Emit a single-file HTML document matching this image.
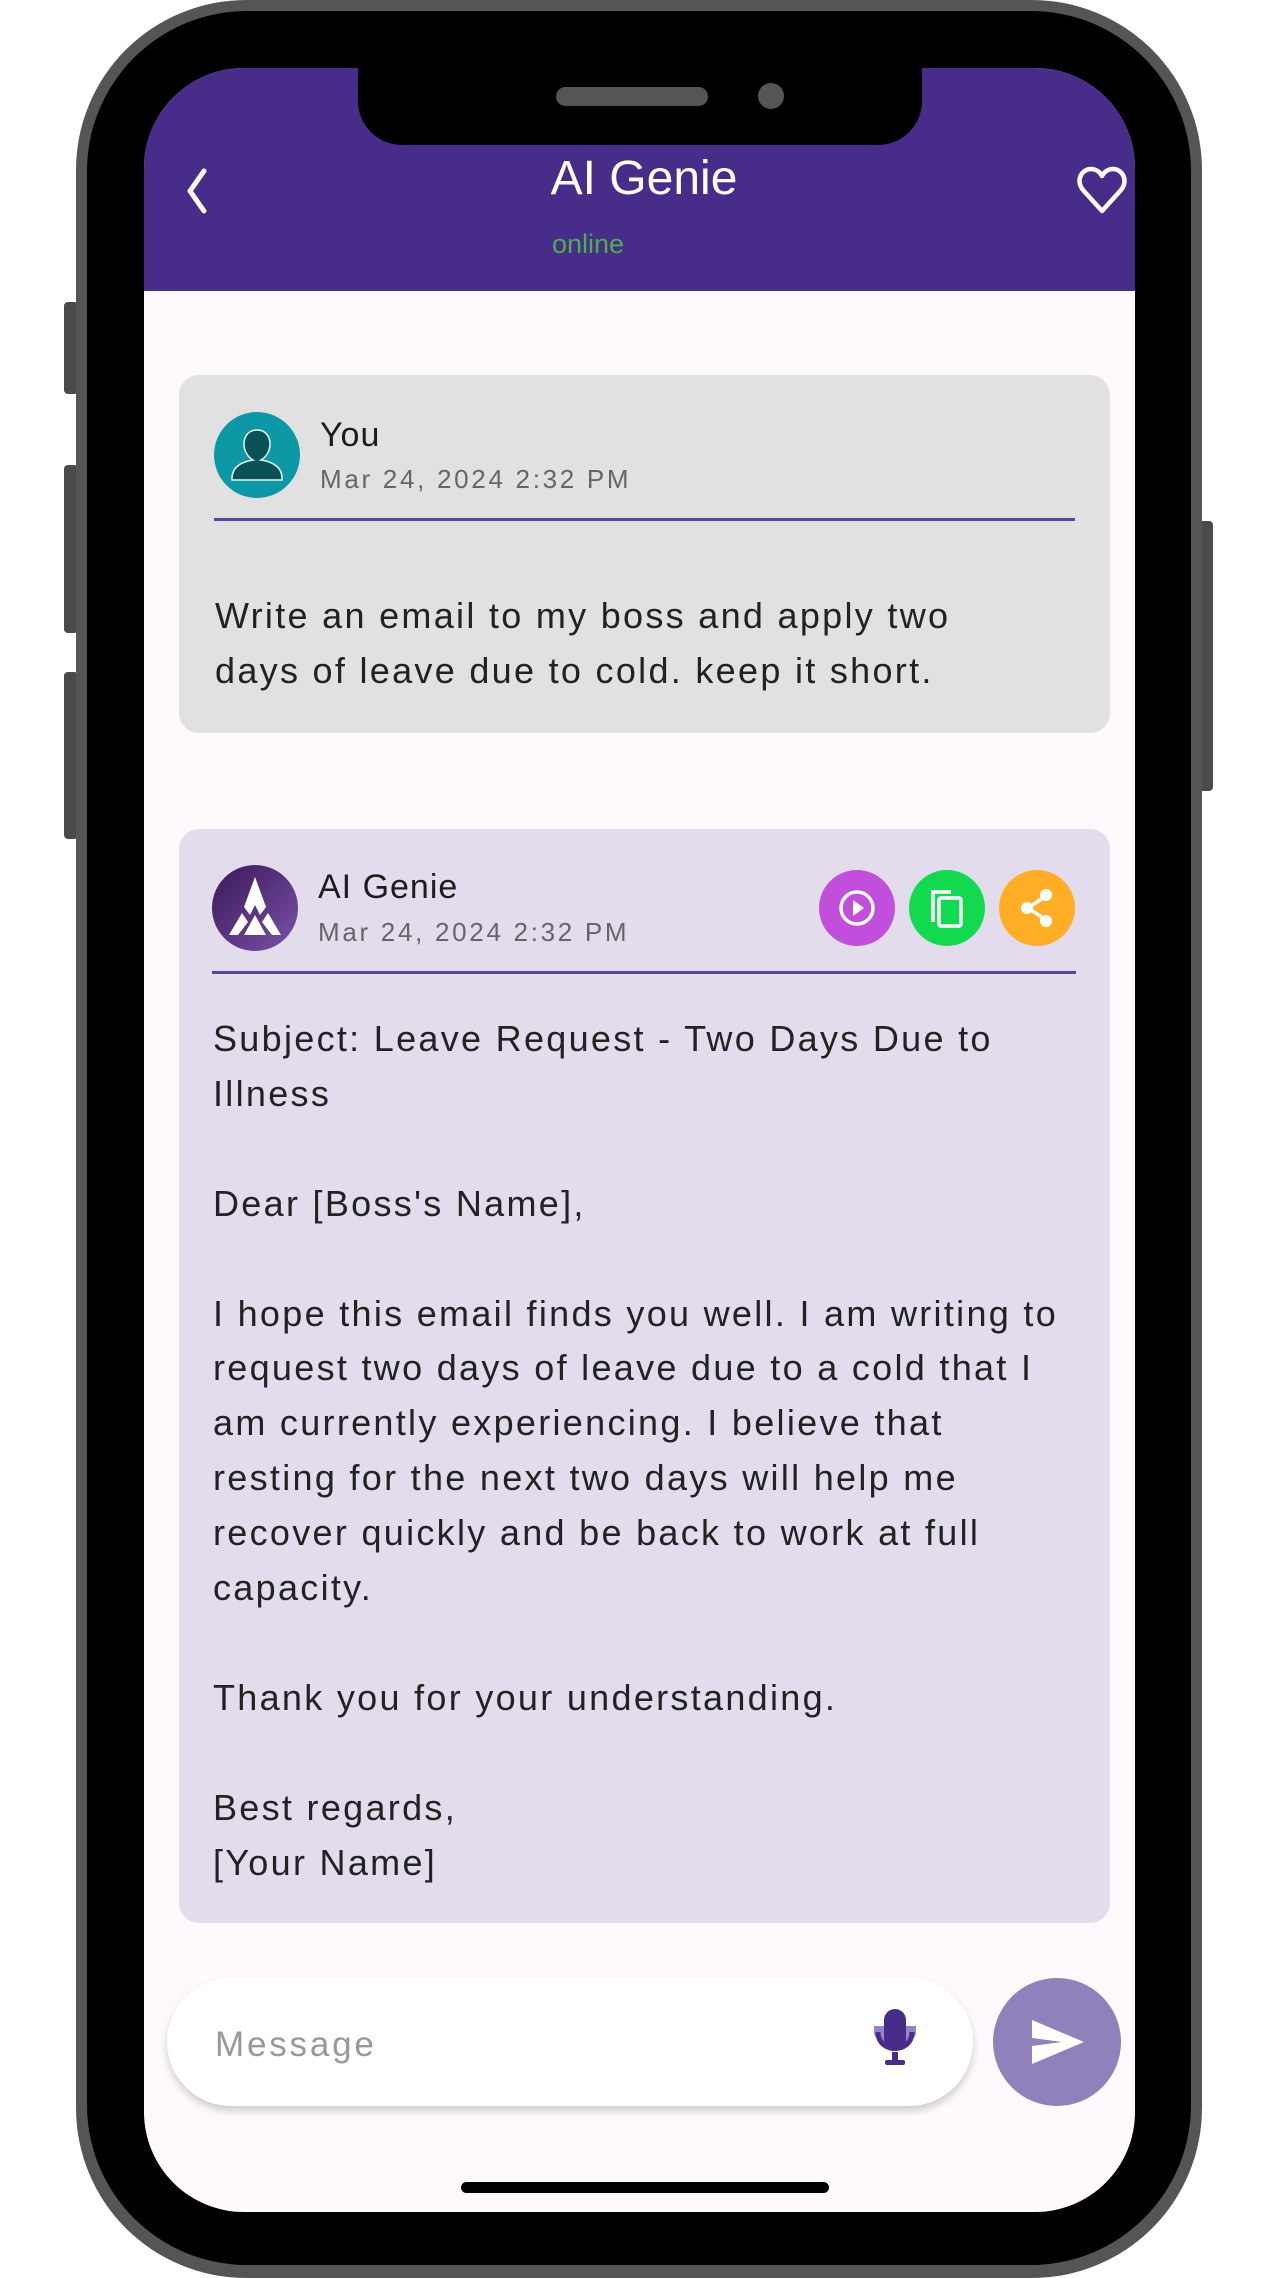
<!DOCTYPE html>
<html><head><meta charset="utf-8"><style>
*{margin:0;padding:0;box-sizing:border-box}
body{width:1280px;height:2275px;background:#fff;position:relative;overflow:hidden;font-family:"Liberation Sans",sans-serif}
.abs{position:absolute}
.btn{position:absolute;background:#4a4a4a;border-radius:4px}
.t{position:absolute;white-space:nowrap}
</style></head><body>
<div class="btn" style="left:64px;top:302px;width:14px;height:92px"></div>
<div class="btn" style="left:64px;top:465px;width:14px;height:168px"></div>
<div class="btn" style="left:64px;top:672px;width:14px;height:167px"></div>
<div class="btn" style="left:1199px;top:521px;width:14px;height:270px"></div>
<div class="abs" style="left:76px;top:0;width:1126px;height:2278px;background:#555;border-radius:170px"></div>
<div class="abs" style="left:87px;top:11px;width:1104px;height:2254px;background:#000;border-radius:160px"></div>
<div class="abs" style="left:144px;top:68px;width:991px;height:2144px;background:#fdf9fd;border-radius:100px;overflow:hidden">
  <div class="abs" style="left:0;top:0;width:991px;height:223px;background:#472c8a"></div>
</div>
<div class="abs" style="left:358px;top:60px;width:564px;height:85px;background:#000;border-radius:0 0 44px 44px"></div>
<div class="abs" style="left:556px;top:87px;width:152px;height:19px;background:#555;border-radius:10px"></div>
<div class="abs" style="left:758px;top:83px;width:26px;height:26px;background:#555;border-radius:50%"></div>
<svg class="abs" style="left:180px;top:166px" width="34" height="50" viewBox="0 0 34 50"><path d="M24 5 L10 25 L24 45" stroke="#fff" stroke-width="5" fill="none" stroke-linecap="round" stroke-linejoin="round"/></svg>
<div class="t" style="left:540px;top:151px;width:208px;text-align:center;color:#fff;font-size:48px">AI Genie</div>
<div class="t" style="left:552px;top:229px;color:#4caf50;font-size:27px">online</div>
<svg class="abs" style="left:1076px;top:166px" width="52" height="50" viewBox="0 0 52 50"><path d="M26 45 L7 24 C-1 14 6 3 15 3 C20 3 24 6 26 10 C28 6 32 3 37 3 C46 3 53 14 45 24 Z" stroke="#fff" stroke-width="4.5" fill="none" stroke-linejoin="round"/></svg>

<div class="abs" style="left:179px;top:375px;width:931px;height:358px;background:#e2e1e2;border-radius:20px"></div>
<svg class="abs" style="left:214px;top:412px" width="86" height="86" viewBox="0 0 86 86"><circle cx="43" cy="43" r="43" fill="#0d98a6"/><path d="M43 18 C52 18 56 25 56 32 C56 40 51 46 47 48 C60 50 68 56 68 66 L68 68 L18 68 L18 66 C18 56 26 50 39 48 C35 46 30 40 30 32 C30 25 34 18 43 18 Z" fill="#0b5258" stroke="#e8f4f4" stroke-width="1.5"/></svg>
<div class="t" style="left:320px;top:416px;font-size:34px;color:#1d1b1e;letter-spacing:1px">You</div>
<div class="t" style="left:320px;top:464px;font-size:26px;color:#666;letter-spacing:2.7px">Mar 24, 2024 2:32 PM</div>
<div class="abs" style="left:214px;top:518px;width:861px;height:3px;background:#5a46a0"></div>
<div class="t" style="left:215px;top:588px;font-size:36px;color:#222;line-height:55px;letter-spacing:2.3px">Write an email to my boss and apply two<br>days of leave due to cold. keep it short.</div>

<div class="abs" style="left:179px;top:829px;width:931px;height:1094px;background:#e2dcec;border-radius:20px"></div>
<svg class="abs" style="left:212px;top:865px" width="86" height="86" viewBox="0 0 86 86"><defs><linearGradient id="g" x1="0" y1="0" x2="1" y2="1"><stop offset="0" stop-color="#3a1858"/><stop offset="1" stop-color="#7a52a8"/></linearGradient></defs><circle cx="43" cy="43" r="43" fill="url(#g)"/><path d="M43 12 L54 42 L48 50 L43 40 L38 50 L32 42 Z" fill="#fff"/><path d="M30 48 L36 57 L26 70 L17 70 Z M56 48 L69 70 L60 70 L50 57 Z M43 50 L54 70 L32 70 Z" fill="#fff"/></svg>
<div class="t" style="left:318px;top:868px;font-size:34px;color:#1d1b1e;letter-spacing:1px">AI Genie</div>
<div class="t" style="left:318px;top:917px;font-size:26px;color:#666;letter-spacing:2.7px">Mar 24, 2024 2:32 PM</div>
<svg class="abs" style="left:819px;top:870px" width="76" height="76" viewBox="0 0 76 76"><circle cx="38" cy="38" r="38" fill="#c24fdc"/><circle cx="38" cy="38" r="16" stroke="#fff" stroke-width="3.5" fill="none"/><path d="M34 30 L45 38 L34 46 Z" fill="#fff"/></svg>
<svg class="abs" style="left:909px;top:870px" width="76" height="76" viewBox="0 0 76 76"><circle cx="38" cy="38" r="38" fill="#12d94f"/><path d="M24 52 L24 22 L42 22" stroke="#fff" stroke-width="3.5" fill="none"/><rect x="30" y="28" width="22" height="28" rx="2" stroke="#fff" stroke-width="3.5" fill="none"/></svg>
<svg class="abs" style="left:999px;top:870px" width="76" height="76" viewBox="0 0 76 76"><circle cx="38" cy="38" r="38" fill="#ffae25"/><path d="M47 26 L29 38 L47 50" stroke="#fff" stroke-width="3.5" fill="none"/><circle cx="47" cy="25" r="6" fill="#fff"/><circle cx="28" cy="38" r="6" fill="#fff"/><circle cx="47" cy="51" r="6" fill="#fff"/></svg>
<div class="abs" style="left:212px;top:971px;width:864px;height:3px;background:#5a46a0"></div>
<div class="t" style="left:213px;top:1012px;font-size:36px;color:#222;line-height:54.9px;letter-spacing:2.3px">Subject: Leave Request - Two Days Due to<br>Illness<br><br>Dear [Boss's Name],<br><br>I hope this email finds you well. I am writing to<br>request two days of leave due to a cold that I<br>am currently experiencing. I believe that<br>resting for the next two days will help me<br>recover quickly and be back to work at full<br>capacity.<br><br>Thank you for your understanding.<br><br>Best regards,<br>[Your Name]</div>

<div class="abs" style="left:167px;top:1978px;width:806px;height:128px;background:#fff;border-radius:64px;box-shadow:0 5px 8px rgba(0,0,0,0.18)"></div>
<div class="t" style="left:215px;top:2025px;font-size:35px;color:#999;letter-spacing:2.8px">Message</div>
<svg class="abs" style="left:870px;top:2008px" width="50" height="62" viewBox="0 0 50 62"><path d="M4 24 C4 40 46 40 46 24 L46 18 L4 18 Z" fill="#9a80c8"/><rect x="14" y="1" width="22" height="42" rx="11" fill="#472c8a"/><path d="M8 24 C8 46 42 46 42 24" stroke="#472c8a" stroke-width="5" fill="none"/><rect x="22" y="44" width="6" height="10" fill="#472c8a"/><rect x="15" y="52" width="20" height="5" rx="2" fill="#472c8a"/></svg>
<div class="abs" style="left:993px;top:1978px;width:128px;height:128px;background:#9080bb;border-radius:50%"></div>
<svg class="abs" style="left:1030px;top:2018px" width="56" height="48" viewBox="0 0 56 48"><path d="M2 2 L54 24 L2 46 L2 28 L32 24 L2 20 Z" fill="#fff"/></svg>
<div class="abs" style="left:461px;top:2182px;width:368px;height:11px;background:#000;border-radius:6px"></div>
</body></html>
